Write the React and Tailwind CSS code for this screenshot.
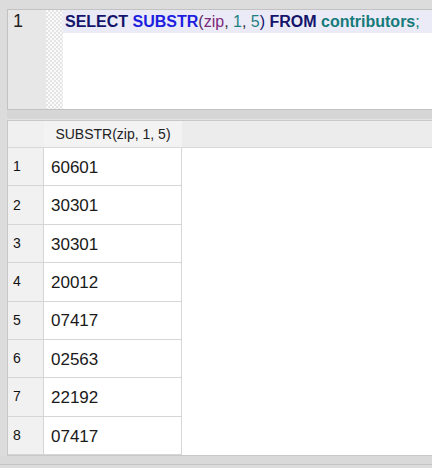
import React from 'react';

const rows = ['60601', '30301', '30301', '20012', '07417', '02563', '22192', '07417'];

const App = () => {
  return (
    <div className="w-[432px] h-[468px] bg-[#dcdcdc] overflow-hidden pt-[9px] pl-[7px] font-['Liberation_Sans',sans-serif]">
      {/* SQL editor */}
      <div className="h-[101px] flex border-l border-t border-b border-[#c2c2c2] bg-white">
        <div className="w-[38px] shrink-0 bg-[#e7e7e7] pl-[5px] text-[18px] leading-[22px] text-[#222]">1</div>
        <div className="w-[17px] shrink-0 bg-[conic-gradient(#e4e4e4_25%,#fafafa_0_50%,#e4e4e4_0_75%,#fafafa_0)] bg-[length:4px_4px]"></div>
        <div className="flex-1 min-w-0">
          <div className="h-[23px] bg-[#ebebf7] pl-[2px] whitespace-nowrap text-[16px] leading-[24px]">
            <span className="font-bold text-[#14146b]">SELECT </span>
            <span className="font-bold text-[#1e1ee0]">SUBSTR</span>
            <span className="text-[#5a2a5a]">(</span>
            <span className="text-[#7b2a7b]">zip</span>
            <span className="text-[#333]">, </span>
            <span className="text-[#1c8080]">1</span>
            <span className="text-[#333]">, </span>
            <span className="text-[#1c8080]">5</span>
            <span className="text-[#14146b]">) </span>
            <span className="font-bold text-[#14146b]">FROM </span>
            <span className="font-bold text-[#147a7a]">contributors</span>
            <span className="text-[#147a7a]">;</span>
          </div>
        </div>
      </div>

      {/* splitter */}
      <div className="h-[10px] bg-[#d6d6d6] border-b border-[#e4e4e4]"></div>

      {/* results grid */}
      <div className="h-[336px] border-l border-t border-b border-[#c8c8c8] bg-white flex flex-col">
        <div className="h-[27px] shrink-0 flex bg-[#ececec] border-b border-[#d9d9d9]">
          <div className="w-[36px] shrink-0 bg-[#f0f0f0]"></div>
          <div className="w-[138px] shrink-0 bg-[#f3f3f3] flex items-center justify-center text-[14px] text-[#222]">
            SUBSTR(zip, 1, 5)
          </div>
          <div className="flex-1"></div>
        </div>
        {rows.map((v, i) => (
          <div key={i} className="h-[38.625px] flex">
            <div className="w-[36px] shrink-0 bg-[#f1f1f1] border-r border-b border-[#d6d6d6] pl-[5px] flex items-center text-[14px] text-[#111]">
              {i + 1}
            </div>
            <div className="w-[138px] shrink-0 border-r border-b border-[#d6d6d6] pl-[7px] flex items-center pt-[2px] text-[17px] text-[#1a1a1a]">
              {v}
            </div>
            <div className="flex-1"></div>
          </div>
        ))}
      </div>
      <div className="h-[9px] bg-[#d9d9d9] -ml-[7px] border-b border-[#c4c4c4]"></div>
    </div>
  );
};

export default App;
